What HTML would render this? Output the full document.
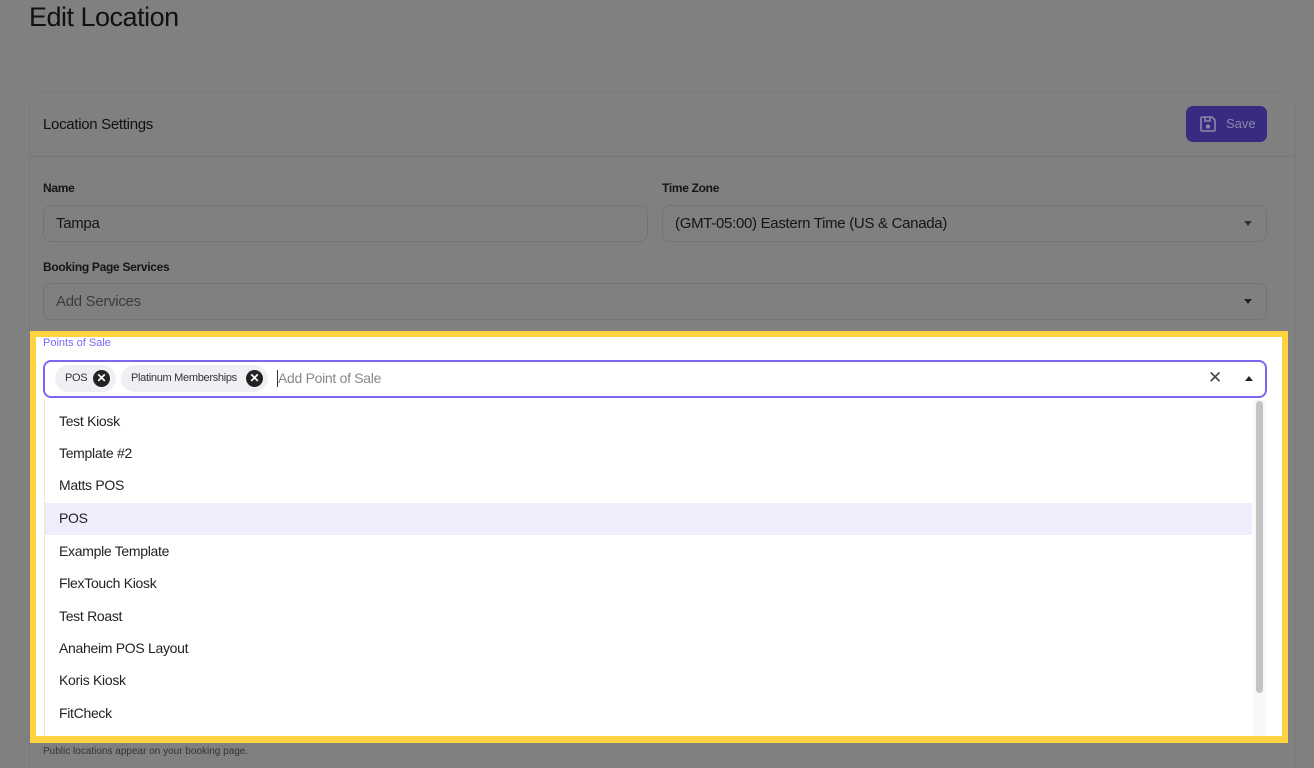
<!DOCTYPE html>
<html><head><meta charset="utf-8"><style>
*{box-sizing:border-box;margin:0;padding:0}
html,body{width:1314px;height:768px;overflow:hidden}
body{background:#808080;font-family:"Liberation Sans",sans-serif;position:relative;color:#1a1a1a}
.abs{position:absolute}
h1{position:absolute;left:29px;top:2px;font-size:27px;font-weight:400;color:#111;letter-spacing:-0.5px}
.card{left:29px;top:92px;width:1267px;height:700px;border:1px solid #7a7a7a;border-radius:14px;background:#808080}
.hdiv{left:29px;top:156px;width:1267px;height:1px;background:#777}
.lbl{font-size:12px;font-weight:700;color:#151515;letter-spacing:-0.3px}
.inp{border:1px solid #747474;border-radius:8px;height:37px;font-size:15px;color:#151515;padding-left:12px;line-height:35px;letter-spacing:-0.3px}
.save{left:1186px;top:106px;width:81px;height:36px;background:#372c82;border-radius:7px;color:#8c88a8;font-size:13px;line-height:36px}
.hl{left:30px;top:331px;width:1258px;height:412px;background:#ffd23f}
.white{left:36px;top:337px;width:1246px;height:399px;background:#fff}
.pos{left:43px;top:360px;width:1224px;height:38px;border:2px solid #7b68ee;border-radius:8px;background:#fff}
.chip{top:365px;height:27px;background:#eef0f4;border-radius:14px;font-size:11px;color:#333;line-height:27px;padding-left:10px;letter-spacing:-0.3px}
.x{position:absolute;top:5px;width:17px;height:17px;border-radius:50%;background:#222;color:#fff;font-size:12px;line-height:17px;text-align:center;font-weight:700;letter-spacing:0}
.list{left:44px;top:400px;width:1209px;height:336px;background:#fff;border-left:1px solid #e8e8e8}
.it{position:absolute;left:14px;font-size:14px;color:#222;letter-spacing:-0.3px}
.sel{left:45px;top:503px;width:1207px;height:32px;background:#efedfc}
</style></head><body>
<h1>Edit Location</h1>
<div class="abs card"></div>
<div class="abs hdiv"></div>
<div class="abs" style="left:43px;top:116px;font-size:15px;color:#111;letter-spacing:-0.3px">Location Settings</div>
<div class="abs save"><svg class="abs" style="left:13px;top:9px" width="18" height="18" viewBox="0 0 18 18" fill="none" stroke="#8c88a8" stroke-width="1.6"><path d="M3 2h10l3 3v10a1 1 0 0 1-1 1H3a1 1 0 0 1-1-1V3a1 1 0 0 1 1-1z"/><path d="M6 2v4h5V2"/><circle cx="9" cy="11.5" r="1.3" fill="#8c88a8"/></svg><span class="abs" style="left:40px;top:0">Save</span></div>
<div class="abs lbl" style="left:43px;top:181px">Name</div>
<div class="abs inp" style="left:43px;top:205px;width:605px">Tampa</div>
<div class="abs lbl" style="left:662px;top:181px">Time Zone</div>
<div class="abs inp" style="left:662px;top:205px;width:605px">(GMT-05:00) Eastern Time (US &amp; Canada)<span class="abs" style="right:14px;top:15px;border:4px solid transparent;border-top:5px solid #333;border-bottom:0"></span></div>
<div class="abs lbl" style="left:43px;top:260px">Booking Page Services</div>
<div class="abs inp" style="left:43px;top:283px;width:1224px;color:#3c3c3c">Add Services<span class="abs" style="right:14px;top:15px;border:4px solid transparent;border-top:5px solid #222;border-bottom:0"></span></div>
<div class="abs" style="left:43px;top:746px;font-size:10px;color:#333">Public locations appear on your booking page.</div>
<div class="abs hl"></div>
<div class="abs white"></div>
<div class="abs" style="left:43px;top:337px;font-size:11px;color:#7b68ee">Points of Sale</div>
<div class="abs pos"></div>
<div class="abs chip" style="left:55px;width:61px">POS<span class="x" style="left:38px">✕</span></div>
<div class="abs chip" style="left:121px;width:147px">Platinum Memberships<span class="x" style="left:125px">✕</span></div>
<div class="abs" style="left:277px;top:370px;width:1px;height:17px;background:#333"></div>
<div class="abs" style="left:278px;top:370px;font-size:14px;color:#888;letter-spacing:-0.3px">Add Point of Sale</div>
<div class="abs" style="left:1208px;top:368px;font-size:17px;color:#444">✕</div>
<div class="abs" style="left:1245px;top:376px;border:4px solid transparent;border-bottom:5px solid #222;border-top:0"></div>
<div class="abs list">
<div class="it" style="top:13px">Test Kiosk</div>
<div class="it" style="top:45px">Template #2</div>
<div class="it" style="top:77px">Matts POS</div>
</div>
<div class="abs sel"></div>
<div class="abs list" style="top:503px;height:233px;background:transparent;border:0">
<div class="it" style="left:15px;top:7px">POS</div>
<div class="it" style="left:15px;top:40px">Example Template</div>
<div class="it" style="left:15px;top:72px">FlexTouch Kiosk</div>
<div class="it" style="left:15px;top:105px">Test Roast</div>
<div class="it" style="left:15px;top:137px">Anaheim POS Layout</div>
<div class="it" style="left:15px;top:169px">Koris Kiosk</div>
<div class="it" style="left:15px;top:202px">FitCheck</div>
</div>
<div class="abs" style="left:1253px;top:400px;width:13px;height:336px;background:#f7f7f7"></div>
<div class="abs" style="left:1256px;top:401px;width:7px;height:292px;background:#c4c4c4;border-radius:4px"></div>
</body></html>
